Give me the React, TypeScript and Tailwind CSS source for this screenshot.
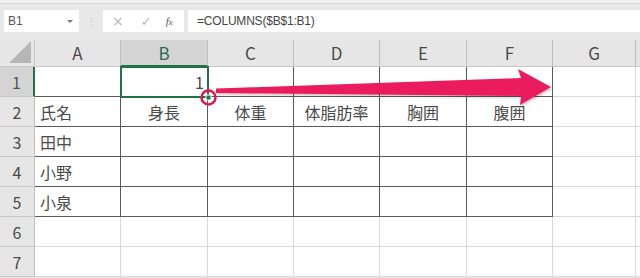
import React from "react";

const cols = [
  { l: "A", w: 86 },
  { l: "B", w: 87 },
  { l: "C", w: 86 },
  { l: "D", w: 86 },
  { l: "E", w: 87 },
  { l: "F", w: 86 },
  { l: "G", w: 83 },
];

const rows: { n: number; cells: (string | null)[] }[] = [
  { n: 1, cells: ["", "1", "", "", "", "", ""] },
  { n: 2, cells: ["氏名", "身長", "体重", "体脂肪率", "胸囲", "腹囲", ""] },
  { n: 3, cells: ["田中", "", "", "", "", "", ""] },
  { n: 4, cells: ["小野", "", "", "", "", "", ""] },
  { n: 5, cells: ["小泉", "", "", "", "", "", ""] },
  { n: 6, cells: ["", "", "", "", "", "", ""] },
  { n: 7, cells: ["", "", "", "", "", "", ""] },
];

const font = { fontFamily: '"Noto Sans CJK JP", "Noto Sans", sans-serif' };

export default function App() {
  return (
    <div className="w-[640px] h-[278px] overflow-hidden bg-[#e8e8e8] relative" style={font}>
      {/* top bar */}
      <div className="h-[40px] border-t-[3px] border-[#f1f1f1] flex flex-col">
        <div className="h-[1px] bg-[#d6d6d6]" />
        <div className="mt-[6px] h-[22px] flex items-stretch">
          <div className="ml-[4px] w-[75px] bg-white flex items-center justify-between px-[4px]">
            <span className="text-[12px] text-[#555]" style={{ fontFamily: '"Liberation Sans", sans-serif' }}>B1</span>
            <span className="w-0 h-0 border-l-[3px] border-r-[3px] border-t-[3px] border-l-transparent border-r-transparent border-t-[#777] mr-[2px]" />
          </div>
          <div className="w-[24px] flex items-center justify-center text-[#bbb] text-[11px]">⋮</div>
          <div className="w-[81px] bg-white flex items-center text-[#b8b8b8]">
            <span className="ml-[9px] text-[14px] leading-none" style={{ fontFamily: '"DejaVu Sans", sans-serif' }}>×</span>
            <span className="ml-[17px] text-[13px] leading-none" style={{ fontFamily: '"DejaVu Sans", sans-serif' }}>✓</span>
            <span className="ml-[14px] text-[11px] italic text-[#555] leading-none" style={{ fontFamily: '"Liberation Serif", serif' }}>f<span className="text-[9px]">x</span></span>
          </div>
          <div className="ml-[4px] flex-1 bg-white flex items-center pl-[9px]">
            <span className="text-[12px] text-[#444] tracking-[-0.2px]" style={{ fontFamily: '"Liberation Sans", sans-serif' }}>=COLUMNS($B$1:B1)</span>
          </div>
        </div>
      </div>

      {/* grid */}
      <div className="relative">
        {/* header row */}
        <div className="flex h-[27px]">
          <div className="w-[35px] shrink-0 bg-[#e6e6e6] border-r border-b border-[#c8c8c8] relative overflow-hidden">
            <div className="absolute right-[3px] bottom-[3px] w-0 h-0" style={{ borderBottom: "22px solid #b6b6b6", borderLeft: "22px solid transparent" }} />
          </div>
          {cols.map((c) => (
            <div
              key={c.l}
              style={{ width: c.w }}
              className={
                "shrink-0 flex items-center justify-center text-[17px] border-r " +
                (c.l === "B"
                  ? "bg-[#d4d4d4] text-[#2d6b4c] border-[#bdbdbd] border-b-2 border-b-[#217346]"
                  : "bg-[#e6e6e6] text-[#4a4a4a] border-[#bdbdbd] border-b border-b-[#c8c8c8]")
              }
            >
              {c.l}
            </div>
          ))}
          <div className="flex-1 bg-[#e6e6e6] border-b border-[#c8c8c8]" />
        </div>

        {rows.map((r) => (
          <div key={r.n} className="flex h-[30px]">
            <div
              className={
                "w-[35px] shrink-0 flex items-center justify-center text-[16px] border-b border-[#c8c8c8] " +
                (r.n === 1
                  ? "bg-[#d4d4d4] text-[#555] border-r-2 border-r-[#217346]"
                  : "bg-[#e6e6e6] text-[#4a4a4a] border-r border-r-[#bdbdbd]")
              }
            >
              {r.n}
            </div>
            {cols.map((c, i) => {
              const inTable = r.n <= 5 && i <= 5;
              const val = r.cells[i];
              const isNum = r.n === 1 && i === 1;
              const left = i === 0 && r.n >= 2;
              return (
                <div
                  key={c.l}
                  style={{ width: c.w }}
                  className={
                    "shrink-0 bg-white flex items-center text-[16px] text-[#4a4a4a] border-r border-b " +
                    (inTable ? "border-[#5a5a5a] " : "border-[#d9d9d9] ") +
                    (isNum ? "justify-end pr-[3px] " : left ? "justify-start pl-[5px] " : "justify-center ")
                  }
                >
                  {val}
                </div>
              );
            })}
            <div className="flex-1 bg-white border-b border-[#d9d9d9]" />
          </div>
        ))}

        {/* selection B1 */}
        <div className="absolute left-[120px] top-[26px] w-[89px] h-[32px] border-2 border-[#217346] pointer-events-none" />

        {/* overlay arrow + circle */}
        <svg className="absolute left-0 top-[-40px] pointer-events-none" width="640" height="278" viewBox="0 0 640 278">
          <defs>
            <filter id="sh" x="-10%" y="-50%" width="120%" height="200%">
              <feDropShadow dx="1" dy="1.5" stdDeviation="1.2" floodColor="#000" floodOpacity="0.25" />
            </filter>
          </defs>
          <polygon
            filter="url(#sh)"
            fill="#ea1f5f"
            points="216,88.5 521,78 518,69 551,87 520,105 521,96 216,93"
          />
          <rect x="206" y="95" width="5" height="5" fill="#217346" stroke="#fff" strokeWidth="1" />
          <circle cx="208.5" cy="97.5" r="7" fill="none" stroke="#e0174f" strokeWidth="2.5" />
        </svg>
      </div>
    </div>
  );
}
